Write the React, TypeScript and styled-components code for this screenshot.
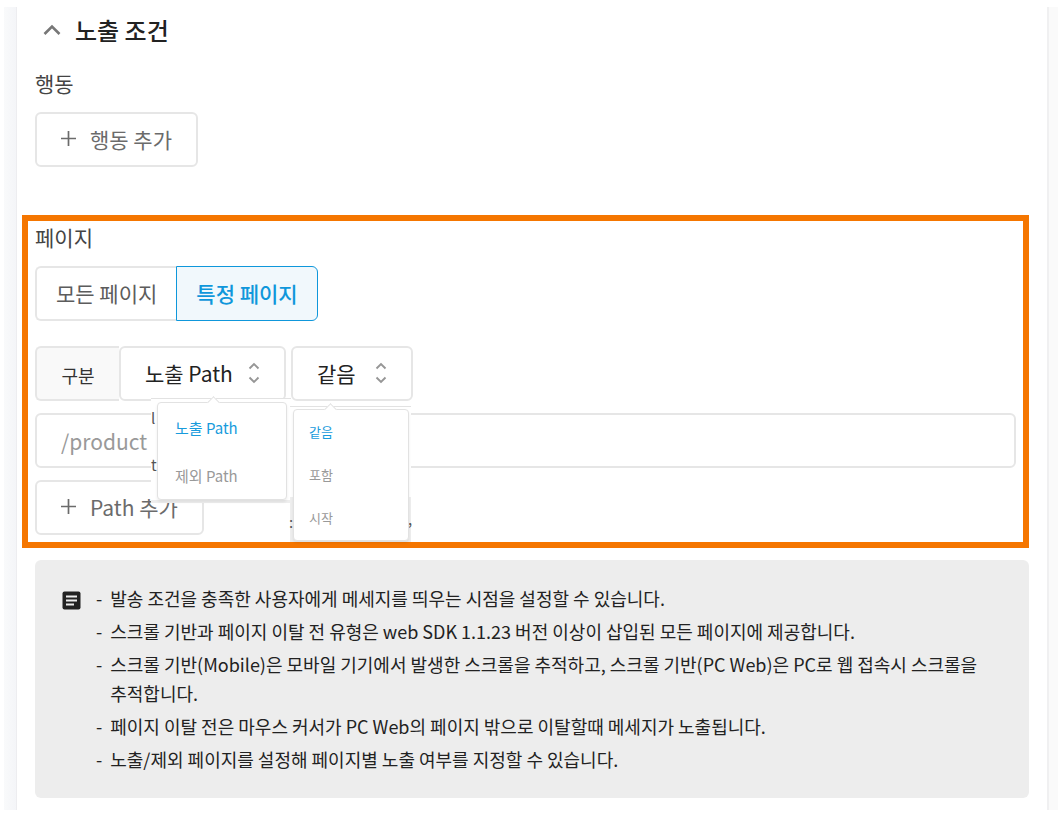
import React from "react";
import styled, { createGlobalStyle } from "styled-components";

const Global = createGlobalStyle`
  * { box-sizing: border-box; }
  body { margin: 0; background: #fff; }
  body, button, input, select {
    font-family: "Noto Sans CJK KR", "Noto Sans", sans-serif;
  }
`;

const Page = styled.div`
  display: flex;
  padding: 7px 2px 0 4px;
  color: #333;
`;

const LeftRail = styled.div`
  width: 12px;
  flex: none;
  background: linear-gradient(90deg, #f9fafb, #f4f5f8);
`;

const RightRail = styled.div`
  width: 11px;
  flex: none;
  border-left: 2px solid #f0f0f1;
  background: #fafafa;
`;

const Panel = styled.main`
  flex: 1;
  min-width: 0;
  padding: 5px 18px 12px;
  border-left: 1px solid #ededf0;
`;

const SectionHeader = styled.button`
  display: flex;
  align-items: center;
  gap: 13px;
  margin: 0 0 0 7px;
  padding: 0;
  border: 0;
  background: none;
  color: #222;
  font-size: 24px;
  font-weight: 500;
  line-height: 36px;
`;

const Label = styled.div`
  font-size: 21px;
  line-height: 32px;
  color: #444;
`;

const ActionSection = styled.section`
  margin-top: 19px;
`;

const OutlineButton = styled.button`
  display: flex;
  align-items: center;
  gap: 13px;
  height: 55px;
  padding: 0 24px 2px 23px;
  border: 2px solid #e6e6e6;
  border-radius: 6px;
  background: #fff;
  color: #6b6b6b;
  font-size: 21px;
  line-height: 32px;
`;

const AddAction = styled(OutlineButton)`
  margin-top: 13px;
`;

const Highlight = styled.section`
  position: relative;
  height: 333px;
  margin: 48px 0 0 -13px;
  padding: 0 7px;
  border: 6px solid #f57600;
`;

const Segments = styled.div`
  display: flex;
  margin-top: 13px;
`;

const Segment = styled.button<{ $active?: boolean }>`
  height: 55px;
  padding: 0 19px 2px;
  border: ${(p) => (p.$active ? "1px solid #0f97db" : "2px solid #e6e6e6")};
  border-right-width: ${(p) => (p.$active ? 1 : 0)}px;
  border-radius: ${(p) => (p.$active ? "0 6px 6px 0" : "6px 0 0 6px")};
  background: ${(p) => (p.$active ? "#f1f8fc" : "#fff")};
  color: ${(p) => (p.$active ? "#0f97db" : "#5c5c5c")};
  font-size: 21px;
  font-weight: ${(p) => (p.$active ? 500 : 400)};
`;

const FilterRow = styled.div`
  display: flex;
  margin-top: 25px;
`;

const Addon = styled.span`
  display: flex;
  align-items: center;
  justify-content: center;
  width: 84px;
  height: 55px;
  padding-top: 2px;
  border: 2px solid #e6e6e6;
  border-right: 0;
  border-radius: 6px 0 0 6px;
  background: #f9f9f9;
  font-size: 18px;
`;

const SelectBox = styled.label<{ $width: number }>`
  position: relative;
  width: ${(p) => p.$width}px;
  height: 55px;
  margin-right: 5px;

  select {
    appearance: none;
    width: 100%;
    height: 55px;
    padding: 0 24px 2px;
    border: 2px solid #e6e6e6;
    border-radius: 6px;
    background: #fff;
    color: #222;
    font-size: 21px;
  }

  svg {
    position: absolute;
    right: 26px;
    top: 16px;
  }
`;

const PathInput = styled.input`
  display: block;
  width: 100%;
  height: 55px;
  margin: 12px 0;
  padding: 0 24px;
  border: 2px solid #e6e6e6;
  border-radius: 6px;
  color: #999;
  font-size: 21px;
`;

const PathPopover = styled.div`
  position: absolute;
  left: 123px;
  top: 177px;
  width: 140px;
  height: 105px;
  padding: 3px 4px 3px 6px;
  background: linear-gradient(#fff 101px, #eee 101px);
  border-top: 1px solid #e2e2e2;
`;

const MatchPopover = styled.div`
  position: absolute;
  left: 262px;
  top: 185px;
  width: 121px;
  height: 136px;
  padding: 2px 2px 0 3px;
  background: linear-gradient(#fff 90px, #eee 90px);
  border-top: 1px solid #e2e2e2;
`;

const Menu = styled.div<{ $small?: boolean }>`
  position: relative;
  display: flex;
  flex-direction: column;
  height: ${(p) => (p.$small ? 132 : 98)}px;
  padding: ${(p) => (p.$small ? "1px 15px" : "1px 17px")};
  border: 1px solid #e2e2e2;
  border-radius: 4px;
  background: #fff;
  box-shadow: 0 2px 3px #00000012;

  &::before {
    content: "";
    position: absolute;
    top: -5px;
    left: ${(p) => (p.$small ? 32 : 51)}px;
    width: 8px;
    height: 8px;
    border: solid #e2e2e2;
    border-width: 1px 0 0 1px;
    background: #fff;
    transform: rotate(45deg);
  }
`;

const Option = styled.button<{ $small?: boolean; $active?: boolean }>`
  height: ${(p) => (p.$small ? 43 : 48)}px;
  flex: none;
  padding: 0 0 2px;
  border: 0;
  background: none;
  text-align: left;
  font-size: ${(p) => (p.$small ? 13 : 15)}px;
  color: ${(p) => (p.$active ? "#189bdc" : "#999")};
`;

const Remnant = styled.span<{ $x: number; $y: number }>`
  position: absolute;
  left: ${(p) => p.$x}px;
  top: ${(p) => p.$y}px;
  font-size: 15px;
  line-height: 16px;
  color: #555;
`;

const Info = styled.aside`
  display: flex;
  gap: 15px;
  margin-top: 12px;
  padding: 24px 30px 20px 27px;
  border-radius: 6px;
  background: #ededed;

  svg {
    flex: none;
    margin-top: 7px;
  }
`;

const Notes = styled.ul`
  margin: 0;
  padding: 0;
  list-style: none;
  color: #222;
  font-size: 18px;
  line-height: 29px;
`;

const Note = styled.li`
  display: flex;
  gap: 8px;
  margin-bottom: 4px;
  word-break: keep-all;

  &::before {
    content: "-";
  }
`;

const Plus = () => (
  <svg width="17" height="17" viewBox="0 0 17 17" stroke="#6b6b6b" strokeWidth="1.7">
    <path d="M8.5 1v15M1 8.5h15" />
  </svg>
);

const Sorter = () => (
  <svg width="12" height="22" viewBox="0 0 12 22" fill="none" stroke="#969696" strokeWidth="1.9">
    <path d="M1.5 6.5 6 2l4.500 4.500M1.500 15.500 6 20l4.500-4.500" />
  </svg>
);

const notes = [
  "발송 조건을 충족한 사용자에게 메세지를 띄우는 시점을 설정할 수 있습니다.",
  "스크롤 기반과 페이지 이탈 전 유형은 web SDK 1.1.23 버전 이상이 삽입된 모든 페이지에 제공합니다.",
  "스크롤 기반(Mobile)은 모바일 기기에서 발생한 스크롤을 추적하고, 스크롤 기반(PC Web)은 PC로 웹 접속시 스크롤을 추적합니다.",
  "페이지 이탈 전은 마우스 커서가 PC Web의 페이지 밖으로 이탈할때 메세지가 노출됩니다.",
  "노출/제외 페이지를 설정해 페이지별 노출 여부를 지정할 수 있습니다.",
];

export default function App() {
  return (
    <>
      <Global />
      <Page>
        <LeftRail />
        <Panel>
          <SectionHeader aria-expanded="true">
            <svg width="20" height="14" viewBox="0 0 20 14" fill="none" stroke="#777" strokeWidth="2.6">
              <path d="M2.500 11 10 3.500 17.500 11" />
            </svg>
            노출 조건
          </SectionHeader>

          <ActionSection>
            <Label>행동</Label>
            <AddAction>
              <Plus />
              행동 추가
            </AddAction>
          </ActionSection>

          <Highlight>
            <Label>페이지</Label>
            <Segments>
              <Segment>모든 페이지</Segment>
              <Segment $active>특정 페이지</Segment>
            </Segments>
            <FilterRow>
              <Addon>구분</Addon>
              <SelectBox $width={167}>
                <select aria-label="구분">
                  <option>노출 Path</option>
                  <option>제외 Path</option>
                </select>
                <Sorter />
              </SelectBox>
              <SelectBox $width={122}>
                <select aria-label="조건">
                  <option>같음</option>
                  <option>포함</option>
                  <option>시작</option>
                </select>
                <Sorter />
              </SelectBox>
            </FilterRow>
            <PathInput aria-label="Path" defaultValue="/product" />
            <OutlineButton>
              <Plus />
              Path 추가
            </OutlineButton>

            <PathPopover>
              <Remnant $x={0} $y={11}>l</Remnant>
              <Remnant $x={0} $y={58}>t</Remnant>
              <Menu>
                <Option $active>노출 Path</Option>
                <Option>제외 Path</Option>
              </Menu>
            </PathPopover>
            <MatchPopover>
              <Remnant $x={-1} $y={107}>:</Remnant>
              <Remnant $x={118} $y={104}>,</Remnant>
              <Menu $small>
                <Option $small $active>같음</Option>
                <Option $small>포함</Option>
                <Option $small>시작</Option>
              </Menu>
            </MatchPopover>
          </Highlight>

          <Info>
            <svg width="19" height="19" viewBox="0 0 19 19">
              <rect x="0.500" y="0.500" width="18" height="18" rx="2" fill="#222" />
              <path d="M4 5.500h11M4 9.500h11M4 13.500h8" stroke="#ededed" strokeWidth="1.8" />
            </svg>
            <Notes>
              {notes.map((note) => (
                <Note key={note}>{note}</Note>
              ))}
            </Notes>
          </Info>
        </Panel>
        <RightRail />
      </Page>
    </>
  );
}
